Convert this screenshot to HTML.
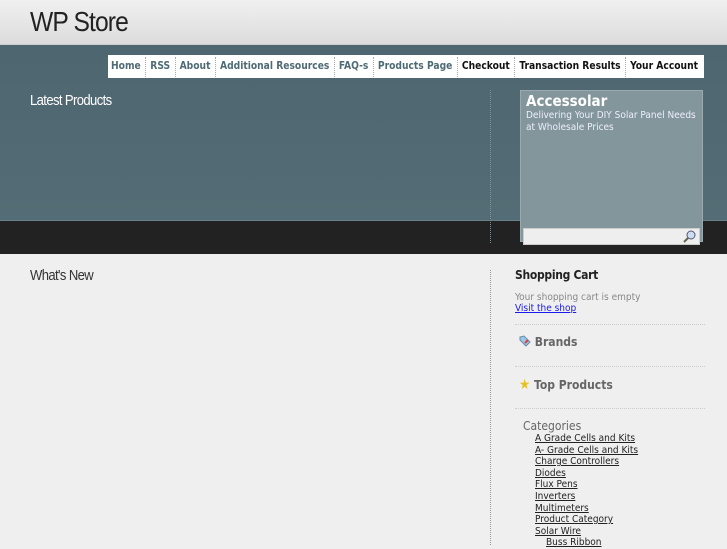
<!DOCTYPE html>
<html><head><style>
*{margin:0;padding:0;box-sizing:border-box}
body{width:727px;height:545px;overflow:hidden;background:#efefef;font-family:"DejaVu Sans Condensed","DejaVu Sans",sans-serif;position:relative}
.hdr{position:absolute;left:0;top:0;width:727px;height:45px;background:linear-gradient(#f0f0f0,#dcdcdc);border-bottom:1px solid #ccc}
.logo{position:absolute;left:30px;top:6px;font-family:"Liberation Sans Narrow","Liberation Sans",sans-serif;font-size:28px;color:#222;letter-spacing:-1px;transform:scaleX(.88);transform-origin:left}
.band{position:absolute;left:0;top:45px;width:727px;height:175px;background:linear-gradient(#4e6670,#546c75)}
.dark{position:absolute;left:0;top:220px;width:727px;height:34px;background:#222;border-top:1px solid #6a8088}
.nav{position:absolute;left:108px;top:55px;width:596px;height:23px;background:#fff;display:flex;align-items:center;justify-content:space-between;font-size:10.2px;font-weight:bold;padding:0 2px 0 0;overflow:hidden}
.nav span{padding:0 4px;border-left:1px dotted #aaa;line-height:20px;color:#4e6a74;white-space:nowrap}
.nav span:first-child{border-left:none;padding-left:3px}
.nav span.b{color:#111}
.t{position:absolute;font-family:"Liberation Sans Narrow","Liberation Sans",sans-serif;font-size:15px;letter-spacing:-.7px;transform:scaleX(.87);transform-origin:left}
.vl{position:absolute;left:490px;border-left:1px dotted #999;}
.box{position:absolute;left:520px;top:90px;width:183px;height:152px;background:#83969b;border:1px solid #9aaaae}
.box h2{color:#fff;font-size:15px;font-weight:bold;margin:1px 0 0 5px}
.box p{color:#eef;font-size:10px;line-height:12px;margin:0 0 0 5px}
.srch{position:absolute;left:523px;top:228px;width:177px;height:17px;background:#eee;border:1px solid #ccc}
.side{position:absolute;left:515px;top:268px;width:190px;font-size:10px;color:#888}
.side h3{font-size:12px;color:#222;margin-bottom:10px;letter-spacing:-.3px}
.side a{color:#1a1aee;text-decoration:underline}
.sep{border-top:1px dotted #ccc;margin:0}
.w{font-size:12px;font-weight:bold;color:#666;padding:10px 0 0 4px;height:41px}
.cats{padding:10px 0 0 8px}
.cats h4{font-size:12px;color:#666;font-weight:normal;margin-bottom:0}
.cats a{display:block;color:#222;margin-left:12px;line-height:11.6px}
</style></head><body>
<div class="hdr"><div class="logo">WP Store</div></div>
<div class="band"></div>
<div class="dark"></div>
<div class="nav"><span>Home</span><span>RSS</span><span>About</span><span>Additional Resources</span><span>FAQ-s</span><span>Products Page</span><span class="b">Checkout</span><span class="b">Transaction Results</span><span class="b">Your Account</span></div>
<div class="t" style="left:30px;top:92px;color:#fff">Latest Products</div>
<div class="t" style="left:30px;top:267px;color:#333">What's New</div>
<div class="vl" style="top:90px;height:153px;border-color:#7d9299"></div>
<div class="vl" style="top:270px;height:275px"></div>
<div class="box"><h2>Accessolar</h2><p>Delivering Your DIY Solar Panel Needs at Wholesale Prices</p></div>
<div class="srch"><svg style="position:absolute;right:3px;top:1px" width="13" height="13" viewBox="0 0 13 13"><circle cx="8" cy="5" r="4" fill="#cde" stroke="#557" stroke-width="1"/><line x1="5" y1="8" x2="1" y2="12" stroke="#665" stroke-width="2"/></svg></div>
<div class="side">
<h3>Shopping Cart</h3>
<div>Your shopping cart is empty</div>
<a>Visit the shop</a>
<div class="sep" style="margin-top:10px"></div>
<div class="w"><svg width="12" height="12" viewBox="0 0 12 12" style="vertical-align:-1px"><path d="M1 2 L5 1 L11 7 L7 11 L1 5Z" fill="#9cc8e8" stroke="#6a8aa8"/><path d="M6 8 L9 5" stroke="#e04040" stroke-width="2"/></svg> Brands</div>
<div class="sep"></div>
<div class="w"><span style="color:#e8c020;font-size:14px">★</span> Top Products</div>
<div class="sep"></div>
<div class="cats"><h4>Categories</h4>
<a>A Grade Cells and Kits</a><a>A- Grade Cells and Kits</a><a>Charge Controllers</a><a>Diodes</a><a>Flux Pens</a><a>Inverters</a><a>Multimeters</a><a>Product Category</a><a>Solar Wire</a><a style="margin-left:23px">Buss Ribbon</a></div>
</div>
</body></html>
